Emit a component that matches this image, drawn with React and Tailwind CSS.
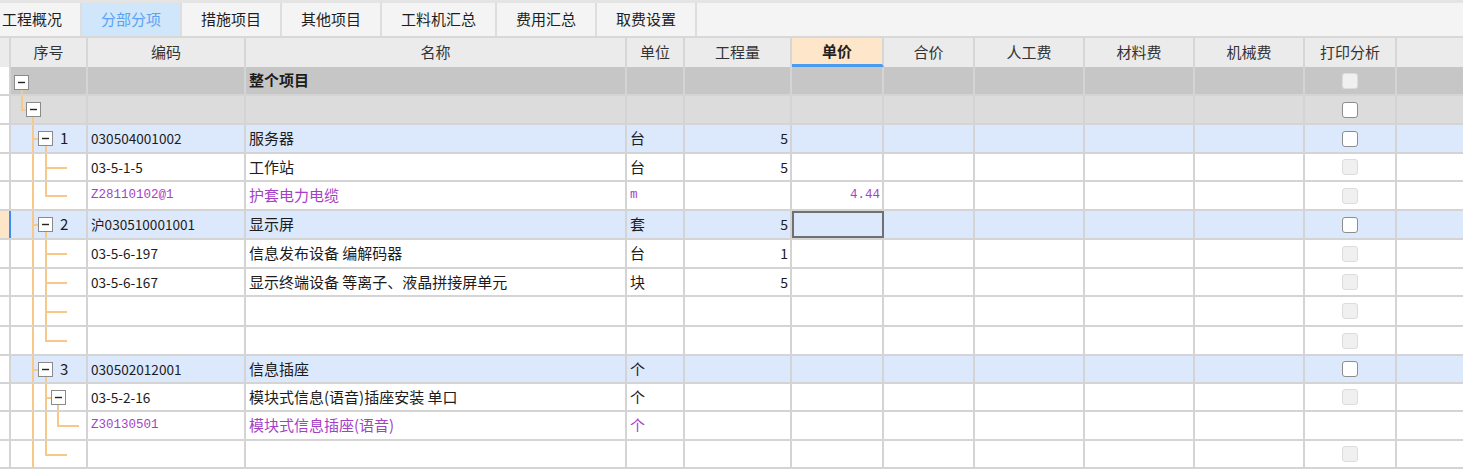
import React from "react";

// 分部分项 grid: tab strip, header row and a tree of budget lines
const CJK = "font-['Noto_Sans_CJK_SC','Noto_Sans',sans-serif]";
const MONO = "font-['Liberation_Mono','Noto_Sans_CJK_SC',monospace]";
const LINE = "#f8c889";

const TABS = ["工程概况", "分部分项", "措施项目", "其他项目", "工料机汇总", "费用汇总", "取费设置"];
const TAB_W = ["w-[82px]", "w-[100px]", "w-[100px]", "w-[100px]", "w-[115px]", "w-[100px]", "w-[100px]"];

const COLS = [
  { key: "xh", title: "序号", w: "w-[77px]" },
  { key: "bm", title: "编码", w: "w-[158px]" },
  { key: "mc", title: "名称", w: "w-[381px]" },
  { key: "dw", title: "单位", w: "w-[58px]" },
  { key: "gcl", title: "工程量", w: "w-[107px]" },
  { key: "dj", title: "单价", w: "w-[92px]" },
  { key: "hj", title: "合价", w: "w-[91px]" },
  { key: "rgf", title: "人工费", w: "w-[110px]" },
  { key: "clf", title: "材料费", w: "w-[110px]" },
  { key: "jxf", title: "机械费", w: "w-[110px]" },
  { key: "dy", title: "打印分析", w: "w-[92px]" },
];

const BLUE = "bg-[#dce9fc]";
const WHITE = "bg-white";

const ROWS = [
  { h: 29, hc: "h-[29px]", bg: "bg-[#c6c6c6]", tree: "root", mc: "整个项目", bold: true, cb: "off" },
  { h: 29, hc: "h-[29px]", bg: "bg-[#dcdcdc]", tree: "group", cb: "on" },
  { h: 29, hc: "h-[29px]", bg: BLUE, tree: "item", no: "1", bm: "030504001002", mc: "服务器", dw: "台", gcl: "5", cb: "on" },
  { h: 28, hc: "h-[28px]", bg: WHITE, tree: "child", bm: "03-5-1-5", mc: "工作站", dw: "台", gcl: "5", cb: "off" },
  { h: 29, hc: "h-[29px]", bg: WHITE, tree: "last", purple: true, bm: "Z28110102@1", mc: "护套电力电缆", dw: "m", dj: "4.44", cb: "off" },
  { h: 29, hc: "h-[29px]", bg: BLUE, tree: "item", no: "2", bm: "沪030510001001", mc: "显示屏", dw: "套", gcl: "5", cb: "on", selected: true },
  { h: 29, hc: "h-[29px]", bg: WHITE, tree: "child", bm: "03-5-6-197", mc: "信息发布设备 编解码器", dw: "台", gcl: "1", cb: "off" },
  { h: 28, hc: "h-[28px]", bg: WHITE, tree: "child", bm: "03-5-6-167", mc: "显示终端设备 等离子、液晶拼接屏单元", dw: "块", gcl: "5", cb: "off" },
  { h: 30, hc: "h-[30px]", bg: WHITE, tree: "child", cb: "off" },
  { h: 29, hc: "h-[29px]", bg: WHITE, tree: "last", cb: "off" },
  { h: 28, hc: "h-[28px]", bg: BLUE, tree: "item", no: "3", bm: "030502012001", mc: "信息插座", dw: "个", cb: "on" },
  { h: 28, hc: "h-[28px]", bg: WHITE, tree: "subgroup", bm: "03-5-2-16", mc: "模块式信息(语音)插座安装 单口", dw: "个", cb: "off" },
  { h: 29, hc: "h-[29px]", bg: WHITE, tree: "sublast", purple: true, bm: "Z30130501", mc: "模块式信息插座(语音)", dw: "个", cb: null },
  { h: 28, hc: "h-[28px]", bg: WHITE, tree: "last", cb: "off" },
];

const Box = ({ x, y }) => (
  <g>
    <rect x={x + 0.5} y={y + 0.5} width="14" height="14" fill="#fff" stroke="#8a8a8a" />
    <line x1={x + 4} y1={y + 7.5} x2={x + 11} y2={y + 7.5} stroke="#222" strokeWidth="1.4" />
  </g>
);

// tree connectors are 2px wide, light orange
const V = ({ x, y1, y2 }) => <line x1={x + 1} y1={y1} x2={x + 1} y2={y2} stroke={LINE} strokeWidth="2" />;
const H = ({ x1, x2, y }) => <line x1={x1} y1={y + 1} x2={x2} y2={y + 1} stroke={LINE} strokeWidth="2" />;

function Tree({ type, h }) {
  const mid = Math.floor(h / 2);
  const by = mid - 7;
  let parts = null;
  if (type === "root") {
    parts = (
      <>
        <V x={10} y1={23} y2={h} />
        <Box x={3} y={8} />
      </>
    );
  } else if (type === "group") {
    parts = (
      <>
        <V x={10} y1={0} y2={mid} />
        <H x1={10} x2={15} y={mid} />
        <V x={21} y1={by + 15} y2={h} />
        <Box x={15} y={by} />
      </>
    );
  } else if (type === "item") {
    parts = (
      <>
        <V x={21} y1={0} y2={h} />
        <H x1={21} x2={27} y={mid} />
        <V x={34} y1={by + 15} y2={h} />
        <Box x={27} y={by} />
      </>
    );
  } else if (type === "child" || type === "last") {
    parts = (
      <>
        <V x={21} y1={0} y2={h} />
        <V x={34} y1={0} y2={type === "last" ? mid + 2 : h} />
        <H x1={34} x2={56} y={mid} />
      </>
    );
  } else if (type === "subgroup") {
    parts = (
      <>
        <V x={21} y1={0} y2={h} />
        <V x={34} y1={0} y2={h} />
        <H x1={34} x2={40} y={mid} />
        <V x={46} y1={by + 15} y2={h} />
        <Box x={40} y={by} />
      </>
    );
  } else if (type === "sublast") {
    parts = (
      <>
        <V x={21} y1={0} y2={h} />
        <V x={34} y1={0} y2={h} />
        <V x={46} y1={0} y2={mid + 2} />
        <H x1={46} x2={68} y={mid} />
      </>
    );
  }
  return (
    <svg className="absolute left-0 top-0" width="75" height={h}>
      {parts}
    </svg>
  );
}

function CheckBox({ state }) {
  if (!state) return null;
  return state === "on" ? (
    <div className="w-[16px] h-[16px] rounded-[3px] bg-white border-[1.5px] border-[#8d8d8d]" />
  ) : (
    <div className="w-[16px] h-[16px] rounded-[3px] bg-[#f0f0f0] border border-[#dcdcdc]" />
  );
}

function Row({ r }) {
  const txt = r.purple ? "text-[#a63fc6]" : "text-[#1c1c1c]";
  const cell = "shrink-0 h-full flex items-center border-r-2 border-[#d4d4d4]";
  return (
    <div className={`flex ${r.hc} border-b-2 border-[#d4d4d4] ${r.bg}`}>
      <div className={`w-[11px] shrink-0 h-full border-r-2 ${r.selected ? "bg-[#fde5c8] border-[#3b8cf0]" : "bg-white border-[#d4d4d4]"}`} />
      <div className={`${cell} w-[77px] relative`}>
        <Tree type={r.tree} h={r.h - 2} />
        {r.no && <span className="relative pl-[49px] text-[15px] text-[#1c1c1c]">{r.no}</span>}
      </div>
      <div className={`${cell} w-[158px] pl-[3px] ${r.purple ? `${MONO} text-[12.5px]` : "text-[13.6px]"} ${txt}`}>{r.bm}</div>
      <div className={`${cell} w-[381px] pl-[3px] text-[15px] ${r.bold ? "font-bold text-[#1c1c1c]" : txt}`}>{r.mc}</div>
      <div className={`${cell} w-[58px] pl-[3px] ${r.dw === "m" ? `${MONO} text-[12.5px]` : "text-[15px]"} ${txt}`}>{r.dw}</div>
      <div className={`${cell} w-[107px] justify-end pr-[2px] text-[14px] ${txt}`}>{r.gcl}</div>
      <div className={`${cell} w-[92px] justify-end pr-[2px] ${MONO} text-[12.5px] ${txt} ${r.selected ? "outline-2 outline-[#707070] -outline-offset-2" : ""}`}>{r.dj}</div>
      <div className={`${cell} w-[91px]`} />
      <div className={`${cell} w-[110px]`} />
      <div className={`${cell} w-[110px]`} />
      <div className={`${cell} w-[110px]`} />
      <div className={`${cell} w-[92px] justify-center`}>
        <CheckBox state={r.cb} />
      </div>
      <div className="flex-1 h-full" />
    </div>
  );
}

export default function App() {
  return (
    <div className={`w-[1463px] h-[471px] overflow-hidden bg-white ${CJK}`}>
      {/* tab strip */}
      <div className="h-[3px] bg-[#e4e4e4]" />
      <div className="flex h-[33px] bg-[#f4f4f4]">
        {TABS.map((t, i) => (
          <div
            key={t}
            className={`${TAB_W[i]} h-full flex items-center border-r-2 border-[#dedede] text-[15px] ${i === 0 ? "pl-[2px]" : "justify-center"} ${i === 1 ? "bg-[#cfe6fb] text-[#5aa2f2]" : "text-[#1e1e1e]"}`}
          >
            {t}
          </div>
        ))}
      </div>
      <div className="h-[2px] bg-[#d8d8d8]" />

      {/* header */}
      <div className="flex h-[29px] bg-[#ebebeb] text-[15px] text-[#333]">
        <div className="w-[11px] shrink-0 h-full border-r-2 border-[#d6d6d6]" />
        {COLS.map((c) =>
          c.key === "dj" ? (
            <div key={c.key} className={`${c.w} shrink-0 h-full flex items-center justify-center bg-[#fde6ca] font-bold text-[#222] border-r-2 border-r-[#d6d6d6] border-b-[3px] border-b-[#4a9bf2]`}>
              {c.title}
            </div>
          ) : (
            <div key={c.key} className={`${c.w} shrink-0 h-full flex items-center justify-center border-r-2 border-[#d6d6d6]`}>
              {c.title}
            </div>
          )
        )}
        <div className="flex-1 h-full" />
      </div>

      {/* body */}
      {ROWS.map((r, i) => (
        <Row key={i} r={r} />
      ))}
    </div>
  );
}
